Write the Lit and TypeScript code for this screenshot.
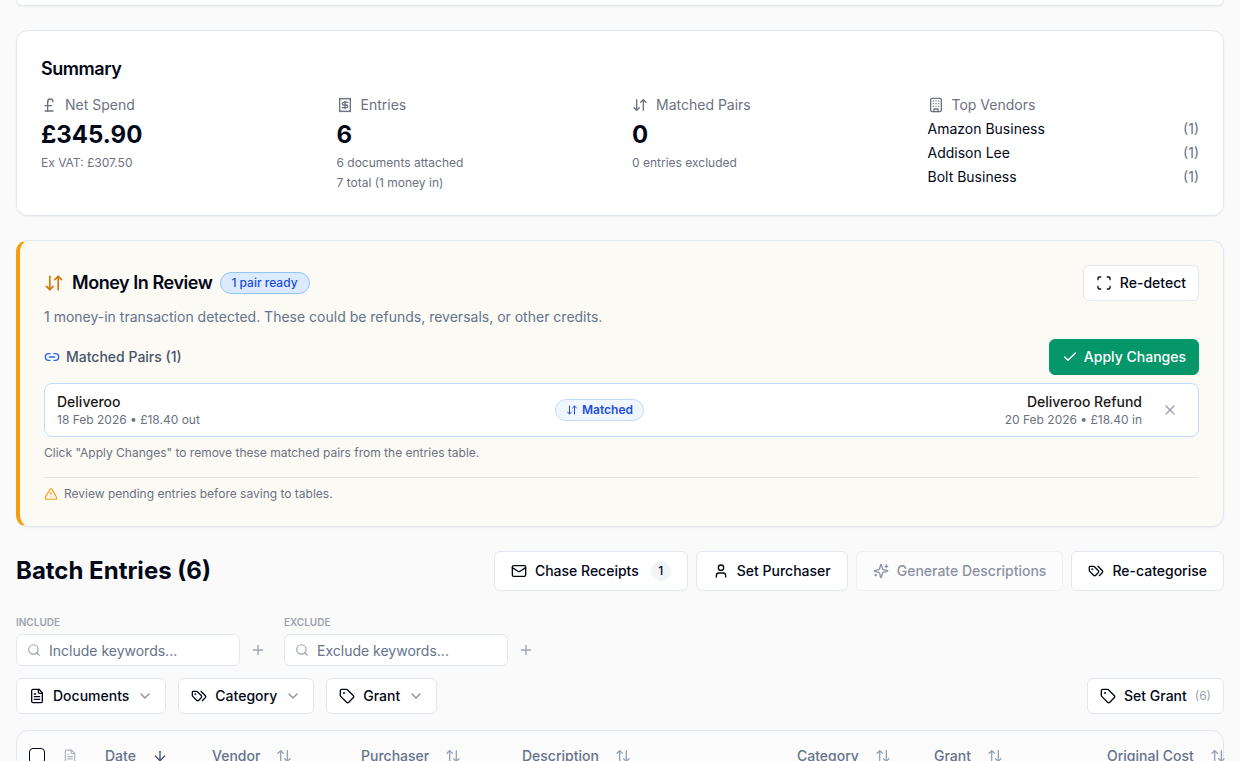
import { LitElement, html, css, svg, SVGTemplateResult } from 'lit'
import { customElement } from 'lit/decorators.js'

// lucide shapes, all on a 24 grid
const icons: Record<string, SVGTemplateResult> = {
  pound: svg`<path d="M18 7c0-5.333-8-5.333-8 0"/><path d="M10 7v14"/><path d="M6 21h12"/><path d="M6 13h10"/>`,
  receipt: svg`<path d="M4 2v20l2-1 2 1 2-1 2 1 2-1 2 1 2-1 2 1V2l-2 1-2-1-2 1-2-1-2 1-2-1-2 1Z"/><path d="M16 8h-6a2 2 0 1 0 0 4h4a2 2 0 1 1 0 4H8"/><path d="M12 17.5v-11"/>`,
  downUp: svg`<path d="m3 16 4 4 4-4"/><path d="M7 20V4"/><path d="m21 8-4-4-4 4"/><path d="M17 4v16"/>`,
  upDown: svg`<path d="m21 16-4 4-4-4"/><path d="M17 20V4"/><path d="m3 8 4-4 4 4"/><path d="M7 4v16"/>`,
  building: svg`<rect x="4" y="2" width="16" height="20" rx="2"/><path d="M9 22v-4h6v4"/><path d="M8 6h.01"/><path d="M16 6h.01"/><path d="M12 6h.01"/><path d="M12 10h.01"/><path d="M12 14h.01"/><path d="M16 10h.01"/><path d="M16 14h.01"/><path d="M8 10h.01"/><path d="M8 14h.01"/>`,
  link: svg`<path d="M9 17H7A5 5 0 0 1 7 7h2"/><path d="M15 7h2a5 5 0 1 1 0 10h-2"/><line x1="8" x2="16" y1="12" y2="12"/>`,
  scan: svg`<path d="M3 7V5a2 2 0 0 1 2-2h2"/><path d="M17 3h2a2 2 0 0 1 2 2v2"/><path d="M21 17v2a2 2 0 0 1-2 2h-2"/><path d="M7 21H5a2 2 0 0 1-2-2v-2"/>`,
  check: svg`<path d="M20 6 9 17l-5-5"/>`,
  x: svg`<path d="M18 6 6 18"/><path d="m6 6 12 12"/>`,
  alert: svg`<path d="m21.73 18-8-14a2 2 0 0 0-3.48 0l-8 14A2 2 0 0 0 4 21h16a2 2 0 0 0 1.73-3"/><path d="M12 9v4"/><path d="M12 17h.01"/>`,
  mail: svg`<rect x="2" y="4" width="20" height="16" rx="2"/><path d="m22 7-8.97 5.7a1.94 1.94 0 0 1-2.06 0L2 7"/>`,
  user: svg`<path d="M19 21v-2a4 4 0 0 0-4-4H9a4 4 0 0 0-4 4v2"/><circle cx="12" cy="7" r="4"/>`,
  sparkles: svg`<path d="M9.937 15.5A2 2 0 0 0 8.5 14.063l-6.135-1.582a.5.5 0 0 1 0-.962L8.5 9.936A2 2 0 0 0 9.937 8.5l1.582-6.135a.5.5 0 0 1 .963 0L14.063 8.5A2 2 0 0 0 15.5 9.937l6.135 1.581a.5.5 0 0 1 0 .964L15.5 14.063a2 2 0 0 0-1.437 1.437l-1.582 6.135a.5.5 0 0 1-.963 0z"/><path d="M20 3v4"/><path d="M22 5h-4"/><path d="M4 17v2"/><path d="M5 18H3"/>`,
  tags: svg`<path d="m15 5 6.3 6.3a2.4 2.4 0 0 1 0 3.4L17 19"/><path d="M9.586 5.586A2 2 0 0 0 8.172 5H3a1 1 0 0 0-1 1v5.172a2 2 0 0 0 .586 1.414L8.29 18.29a2.426 2.426 0 0 0 3.42 0l3.58-3.58a2.426 2.426 0 0 0 0-3.42z"/><circle cx="6.5" cy="9.5" r=".5" fill="currentColor"/>`,
  tag: svg`<path d="M12.586 2.586A2 2 0 0 0 11.172 2H4a2 2 0 0 0-2 2v7.172a2 2 0 0 0 .586 1.414l8.704 8.704a2.426 2.426 0 0 0 3.42 0l6.58-6.58a2.426 2.426 0 0 0 0-3.42z"/><circle cx="7.5" cy="7.5" r=".5" fill="currentColor"/>`,
  search: svg`<path d="m21 21-4.34-4.34"/><circle cx="11" cy="11" r="8"/>`,
  plus: svg`<path d="M5 12h14"/><path d="M12 5v14"/>`,
  chevron: svg`<path d="m6 9 6 6 6-6"/>`,
  file: svg`<path d="M15 2H6a2 2 0 0 0-2 2v16a2 2 0 0 0 2 2h12a2 2 0 0 0 2-2V7Z"/><path d="M14 2v4a2 2 0 0 0 2 2h4"/><path d="M10 9H8"/><path d="M16 13H8"/><path d="M16 17H8"/>`,
  arrowDown: svg`<path d="M12 5v14"/><path d="m19 12-7 7-7-7"/>`,
}

const icon = (name: string, cls = 'i16') =>
  html`<svg class="icon ${cls}" viewBox="0 0 24 24" fill="none" stroke="currentColor" stroke-width="2" stroke-linecap="round" stroke-linejoin="round">${icons[name]}</svg>`

const stats = [
  { icon: 'pound', label: 'Net Spend', value: '£345.90', subs: ['Ex VAT: £307.50'] },
  { icon: 'receipt', label: 'Entries', value: '6', subs: ['6 documents attached', '7 total (1 money in)'] },
  { icon: 'downUp', label: 'Matched Pairs', value: '0', subs: ['0 entries excluded'] },
]
const vendors = ['Amazon Business', 'Addison Lee', 'Bolt Business']

const columns = [
  { label: 'Date', cls: 'c-date', sort: 'arrowDown' },
  { label: 'Vendor', cls: 'c-vendor', sort: 'upDown' },
  { label: 'Purchaser', cls: 'c-purchaser', sort: 'upDown' },
  { label: 'Description', cls: 'c-description', sort: 'upDown' },
  { label: 'Category', cls: 'c-category', sort: 'upDown' },
  { label: 'Grant', cls: 'c-grant', sort: 'upDown' },
  { label: 'Original Cost', cls: 'c-cost', sort: 'upDown' },
]

@customElement('app-root')
export class AppRoot extends LitElement {
  static styles = css`
    :host {
      display: block;
      height: 761px;
      overflow: hidden;
      background: #fafafa;
      font-family: Inter, 'Liberation Sans', sans-serif;
      color: #020817;
      font-size: 14px;
      line-height: 20px;
    }
    .page {
      display: flex;
      flex-direction: column;
      padding: 0 16px;
    }
    .icon { display: block; flex: none; }
    .i12 { width: 12px; height: 12px; }
    .i14 { width: 14px; height: 14px; }
    .i16 { width: 16px; height: 16px; }
    .i20 { width: 20px; height: 20px; }

    .card {
      background: #fff;
      border: 1px solid #e2e8f0;
      border-radius: 12px;
      box-shadow: 0 1px 2px rgba(15, 23, 42, 0.05);
    }
    .stub {
      height: 5px;
      border-top: none;
      border-radius: 0 0 12px 12px;
      margin-bottom: 24px;
    }

    .summary { padding: 24px; margin-bottom: 24px; height: 186px; box-sizing: border-box; }
    .summary h2 { margin: 0 0 12px; font-size: 18px; line-height: 28px; font-weight: 600; letter-spacing: -0.45px; }
    .stats { display: grid; grid-template-columns: repeat(4, 1fr); gap: 24px; }
    .stat-label { display: flex; align-items: center; gap: 8px; color: #6b7280; height: 20px; }
    .stat-value { font-size: 24px; line-height: 32px; font-weight: 700; margin-top: 4px; }
    .stat-sub { font-size: 12px; line-height: 16px; color: #6b7280; margin-top: 4px; }
    .vendor { display: flex; justify-content: space-between; margin-top: 4px; }
    .vendor span:last-child { color: #6b7280; }

    .review {
      background: #fbfaf5;
      border-left: 4px solid #f59e0b;
      padding: 24px;
      margin-bottom: 24px;
    }
    .review-head { display: flex; justify-content: space-between; align-items: center; }
    .review-title { display: flex; align-items: center; gap: 8px; }
    .review-title .icon { color: #d97706; }
    .review-title h3 { margin: 0; font-size: 18px; line-height: 28px; font-weight: 600; letter-spacing: -0.45px; }
    .pill-ready {
      background: #dbeafe;
      border: 1px solid #93c5fd;
      color: #1d4ed8;
      border-radius: 999px;
      padding: 1px 11px 1px 10px;
      font-size: 12px;
      line-height: 18px;
      font-weight: 500;
    }
    .review-desc { color: #64748b; margin: 6px 0 12px; }
    .pairs-head { display: flex; justify-content: space-between; align-items: center; margin-bottom: 8px; }
    .pairs-title { display: flex; align-items: center; gap: 6px; color: #475569; font-weight: 500; }
    .pairs-title .icon { color: #2563eb; }

    .btn {
      display: inline-flex;
      align-items: center;
      gap: 8px;
      box-sizing: border-box;
      background: #fff;
      border: 1px solid #e2e8f0;
      border-radius: 6px;
      font: inherit;
      font-weight: 500;
      color: #020817;
      white-space: nowrap;
    }
    .btn-sm { height: 36px; padding: 0 12px; }
    .btn-lg { height: 40px; padding: 0 16px; }
    .btn-apply { background: #059669; border-color: #059669; color: #fff; gap: 6px; }
    .btn-disabled { color: #8a92a3; border-color: #eef1f5; background: #fcfcfd; }

    .pair {
      display: grid;
      grid-template-columns: 1fr auto 1fr auto;
      align-items: center;
      height: 54px;
      box-sizing: border-box;
      background: #fff;
      border: 1px solid #bfdbfe;
      border-radius: 8px;
      padding: 0 20px 0 12px;
    }
    .pair-side-name { font-weight: 500; color: #1c1917; }
    .pair-side-meta { font-size: 12px; line-height: 16px; color: #6b7280; }
    .pair-right { text-align: right; }
    .pill-matched {
      display: inline-flex;
      align-items: center;
      gap: 4px;
      background: #eff6ff;
      border: 1px solid #bfdbfe;
      color: #1d4ed8;
      border-radius: 999px;
      padding: 0 10px;
      font-size: 12px;
      line-height: 20px;
      font-weight: 600;
    }
    .pair-close { color: #9ca3af; margin-left: 20px; }
    .note { font-size: 12px; line-height: 16px; color: #6b7280; margin: 8px 0 16px; }
    .warning {
      display: flex;
      align-items: center;
      gap: 6px;
      border-top: 1px solid #e7e5e4;
      padding-top: 8px;
      font-size: 12px;
      line-height: 16px;
      color: #6b7280;
    }
    .warning .icon { color: #f59e0b; }

    .batch-head { display: flex; justify-content: space-between; align-items: center; margin-bottom: 24px; }
    .batch-head h2 { margin: 0; font-size: 24px; line-height: 32px; font-weight: 700; }
    .batch-actions { display: flex; gap: 8px; }
    .count {
      width: 20px;
      height: 20px;
      border-radius: 50%;
      background: #f1f5f9;
      font-size: 12px;
      line-height: 20px;
      text-align: center;
      margin-left: 4px;
    }

    .keywords { display: flex; gap: 18px; margin-bottom: 12px; }
    .kw-label {
      font-size: 10px;
      line-height: 15px;
      font-weight: 600;
      color: #9ca3af;
      text-transform: uppercase;
      margin-bottom: 4px;
    }
    .kw-row { display: flex; align-items: center; gap: 10px; }
    .kw-input {
      display: flex;
      align-items: center;
      gap: 8px;
      width: 224px;
      height: 32px;
      box-sizing: border-box;
      background: #fff;
      border: 1px solid #e2e8f0;
      border-radius: 6px;
      padding: 0 10px;
      color: #64748b;
    }
    .kw-input .icon { color: #9ca3af; }
    .kw-text { padding-top: 2px; }
    .kw-plus { color: #9ca3af; }

    .filters { display: flex; gap: 12px; margin-bottom: 16px; }
    .filters .spacer { flex: 1; }
    .chev { color: #8b8f98; }
    .muted-count { color: #9ca3af; font-size: 12px; font-weight: 400; }

    .table { border: 1px solid #e2e8f0; border-radius: 12px; background: #fbfbfc; }
    .thead { display: flex; align-items: center; height: 50px; color: #64748b; font-weight: 500; }
    .c-check { width: 46px; padding-left: 12px; box-sizing: border-box; flex: none; }
    .box { display: block; width: 16px; height: 16px; box-sizing: border-box; border: 1.5px solid #020817; border-radius: 4px; background: #fff; }
    .c-doc { width: 42px; flex: none; color: #b0b5bd; }
    .th { display: flex; align-items: center; gap: 16px; flex: none; white-space: nowrap; }
    .th .icon { color: #94a3b8; }
    .th .sorted { color: #475569; }
    .c-date { width: 107px; }
    .c-vendor { width: 149px; }
    .c-purchaser { width: 161px; }
    .c-description { width: 275px; }
    .c-category { width: 137px; }
    .c-grant { width: 173px; }
    .c-cost { width: 117px; }
  `

  render() {
    return html`
      <div class="page">
        <div class="card stub"></div>

        <section class="card summary">
          <h2>Summary</h2>
          <div class="stats">
            ${stats.map(
              (s) => html`
                <div>
                  <div class="stat-label">${icon(s.icon)}<span>${s.label}</span></div>
                  <div class="stat-value">${s.value}</div>
                  ${s.subs.map((t) => html`<div class="stat-sub">${t}</div>`)}
                </div>
              `
            )}
            <div>
              <div class="stat-label">${icon('building')}<span>Top Vendors</span></div>
              ${vendors.map((v) => html`<div class="vendor"><span>${v}</span><span>(1)</span></div>`)}
            </div>
          </div>
        </section>

        <section class="card review">
          <div class="review-head">
            <div class="review-title">
              ${icon('downUp', 'i20')}
              <h3>Money In Review</h3>
              <span class="pill-ready">1 pair ready</span>
            </div>
            <button class="btn btn-sm">${icon('scan')}Re-detect</button>
          </div>
          <div class="review-desc">1 money-in transaction detected. These could be refunds, reversals, or other credits.</div>
          <div class="pairs-head">
            <div class="pairs-title">${icon('link')}Matched Pairs (1)</div>
            <button class="btn btn-sm btn-apply">${icon('check')}Apply Changes</button>
          </div>
          <div class="pair">
            <div>
              <div class="pair-side-name">Deliveroo</div>
              <div class="pair-side-meta">18 Feb 2026 • £18.40 out</div>
            </div>
            <span class="pill-matched">${icon('downUp', 'i12')}Matched</span>
            <div class="pair-right">
              <div class="pair-side-name">Deliveroo Refund</div>
              <div class="pair-side-meta">20 Feb 2026 • £18.40 in</div>
            </div>
            <span class="pair-close">${icon('x')}</span>
          </div>
          <div class="note">Click "Apply Changes" to remove these matched pairs from the entries table.</div>
          <div class="warning">${icon('alert', 'i14')}Review pending entries before saving to tables.</div>
        </section>

        <div class="batch-head">
          <h2>Batch Entries (6)</h2>
          <div class="batch-actions">
            <button class="btn btn-lg">${icon('mail')}Chase Receipts<span class="count">1</span></button>
            <button class="btn btn-lg">${icon('user')}Set Purchaser</button>
            <button class="btn btn-lg btn-disabled">${icon('sparkles')}Generate Descriptions</button>
            <button class="btn btn-lg">${icon('tags')}Re-categorise</button>
          </div>
        </div>

        <div class="keywords">
          ${['Include', 'Exclude'].map(
            (k) => html`
              <div>
                <div class="kw-label">${k}</div>
                <div class="kw-row">
                  <div class="kw-input">${icon('search', 'i14')}<span class="kw-text">${k} keywords...</span></div>
                  <span class="kw-plus">${icon('plus', 'i16')}</span>
                </div>
              </div>
            `
          )}
        </div>

        <div class="filters">
          <button class="btn btn-sm">${icon('file')}Documents<span class="chev">${icon('chevron')}</span></button>
          <button class="btn btn-sm">${icon('tags')}Category<span class="chev">${icon('chevron')}</span></button>
          <button class="btn btn-sm">${icon('tag')}Grant<span class="chev">${icon('chevron')}</span></button>
          <span class="spacer"></span>
          <button class="btn btn-sm">${icon('tag')}Set Grant<span class="muted-count">(6)</span></button>
        </div>

        <div class="table">
          <div class="thead">
            <div class="c-check"><span class="box"></span></div>
            <div class="c-doc">${icon('file', 'i14')}</div>
            ${columns.map(
              (c) => html`
                <div class="th ${c.cls}">
                  <span>${c.label}</span>
                  ${icon(c.sort, c.sort === 'arrowDown' ? 'i16 sorted' : 'i16')}
                </div>
              `
            )}
          </div>
        </div>
      </div>
    `
  }
}
